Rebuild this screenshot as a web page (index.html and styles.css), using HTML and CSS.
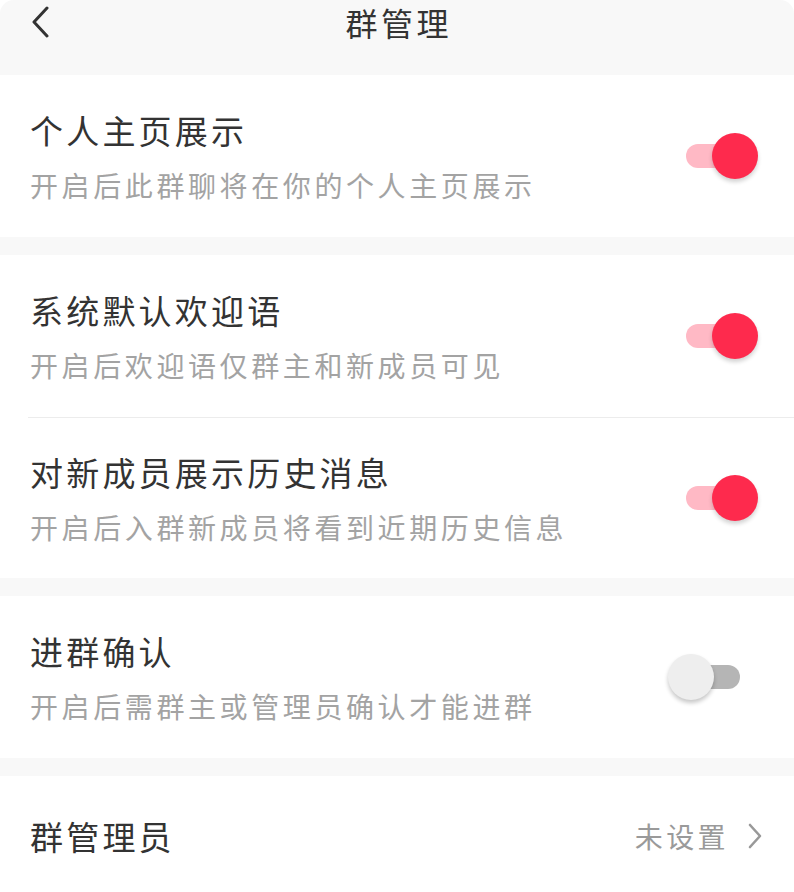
FILE: index.html
```html
<!DOCTYPE html>
<html lang="zh-CN">
<head>
<meta charset="utf-8">
<title>群管理</title>
<link rel="stylesheet" href="styles.css">
</head>
<body>
<div class="page">
  <header class="header">
    <div class="back">
      <svg width="20" height="32" viewBox="0 0 20 32"><polyline points="16,2 3,16 16,30" fill="none" stroke="#333" stroke-width="3" stroke-linecap="round" stroke-linejoin="round"/></svg>
    </div>
    <h1 class="title">群管理</h1>
    <div class="spacer"></div>
  </header>

  <section class="section">
    <div class="row">
      <div class="text">
        <div class="label">个人主页展示</div>
        <div class="desc">开启后此群聊将在你的个人主页展示</div>
      </div>
      <div class="switch on"></div>
    </div>
  </section>

  <section class="section">
    <div class="row">
      <div class="text">
        <div class="label">系统默认欢迎语</div>
        <div class="desc">开启后欢迎语仅群主和新成员可见</div>
      </div>
      <div class="switch on"></div>
    </div>
    <div class="row divided">
      <div class="text">
        <div class="label">对新成员展示历史消息</div>
        <div class="desc">开启后入群新成员将看到近期历史信息</div>
      </div>
      <div class="switch on"></div>
    </div>
  </section>

  <section class="section">
    <div class="row">
      <div class="text">
        <div class="label">进群确认</div>
        <div class="desc">开启后需群主或管理员确认才能进群</div>
      </div>
      <div class="switch"></div>
    </div>
  </section>

  <section class="section last">
    <div class="row short">
      <div class="label">群管理员</div>
      <div class="value">
        <span class="value-text">未设置</span>
        <svg width="16" height="26" viewBox="0 0 16 26"><polyline points="3,2 13,13 3,24" fill="none" stroke="#999" stroke-width="2.6" stroke-linecap="round" stroke-linejoin="round"/></svg>
      </div>
    </div>
  </section>
</div>
</body>
</html>
```

FILE: styles.css
```css
html, body {
  margin: 0;
  padding: 0;
  background: #ffffff;
}

body {
  font-family: "Noto Sans CJK SC", "Noto Sans", sans-serif;
  width: 794px;
  height: 892px;
  overflow: hidden;
}

.page {
  background: #f8f8f8;
  border-radius: 14px 14px 0 0;
  height: 892px;
  overflow: hidden;
}

.header {
  height: 75px;
  display: grid;
  grid-template-columns: 1fr auto 1fr;
  align-items: start;
}

.back {
  padding-left: 31px;
  padding-top: 6px;
  display: flex;
}

.title {
  margin: 0;
  font-size: 32px;
  font-weight: 400;
  letter-spacing: 3.5px;
  padding-left: 3.5px;
  line-height: 44px;
  color: #333333;
}

.section {
  background: #ffffff;
  margin-bottom: 18px;
}

.section.last {
  margin-bottom: 0;
}

.row {
  height: 162px;
  margin-left: 28px;
  padding-left: 2px;
  display: flex;
  align-items: center;
  justify-content: space-between;
  box-sizing: border-box;
}

.row.divided {
  border-top: 1px solid #ececec;
  height: 161px;
}

.row.short {
  height: 120px;
}

.text {
  display: flex;
  flex-direction: column;
  gap: 15px;
  padding-top: 3px;
}

.label {
  font-size: 33px;
  line-height: 40px;
  letter-spacing: 3.2px;
  color: #333333;
  white-space: nowrap;
}

.desc {
  font-size: 28px;
  line-height: 40px;
  letter-spacing: 3.6px;
  color: #a3a3a3;
  white-space: nowrap;
}

.switch {
  position: relative;
  width: 54px;
  height: 24px;
  border-radius: 12px;
  background: #b5b5b5;
  margin-right: 54px;
  flex: none;
}

.switch::after {
  content: "";
  position: absolute;
  width: 46px;
  height: 46px;
  border-radius: 50%;
  top: -11px;
  left: -18px;
  background: #eeeeee;
  box-shadow: 0 3px 4px rgba(0, 0, 0, 0.22);
}

.switch.on {
  background: #ffb9c5;
}

.switch.on::after {
  left: 26px;
  background: #fe2a4d;
  box-shadow: 0 3px 4px rgba(0, 0, 0, 0.18);
}

.value {
  display: flex;
  align-items: center;
  gap: 18px;
  margin-right: 31px;
}

.value-text {
  font-size: 28px;
  letter-spacing: 3.4px;
  color: #9a9a9a;
  line-height: 40px;
}
```
